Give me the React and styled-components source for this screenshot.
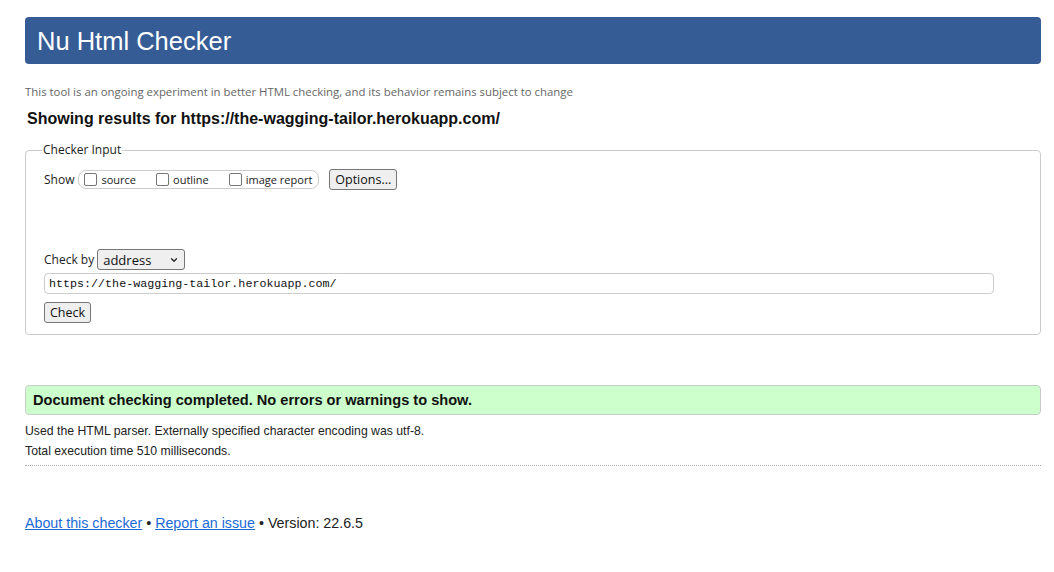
import styled, { createGlobalStyle } from 'styled-components';
import { ChevronDown } from 'lucide-react';

const GlobalStyle = createGlobalStyle`
	html, body {
		margin: 0;
		padding: 0;
		background: #ffffff;
	}
	body {
		font-family: Arial, 'Liberation Sans', sans-serif;
		color: #222222;
	}
`;

const Page = styled.div`
	padding: 17px 13px 40px 25px;
`;

const Banner = styled.h1`
	margin: 0;
	height: 47px;
	line-height: 48px;
	padding-left: 12px;
	background: #365c96;
	border-radius: 4px;
	color: #ffffff;
	font-family: 'Liberation Sans', Arial, sans-serif;
	font-weight: normal;
	font-size: 25.5px;
`;

const Tagline = styled.p`
	margin: 20px 0 0;
	font-family: 'Open Sans', 'Noto Sans', sans-serif;
	font-size: 11.4px;
	line-height: 16px;
	color: #666666;
`;

const ResultsFor = styled.h2`
	margin: 10px 0 0 2px;
	font-family: 'Liberation Sans', Arial, sans-serif;
	font-size: 16px;
	line-height: 18px;
	color: #111111;
`;

const Fieldset = styled.fieldset`
	margin: 14px 0 0;
	padding: 2px 18px 11px 18px;
	border: 1px solid #cccccc;
	border-radius: 4px;
	font-family: 'Open Sans', 'Noto Sans', sans-serif;
	font-size: 12px;
	color: #222222;
	legend {
		padding: 0 1px;
		margin-left: -2px;
		line-height: 16px;
	}
`;

const Row = styled.div`
	display: flex;
	align-items: center;
	margin-top: ${(p) => p.$top || 0}px;
	height: 21px;
`;

const Label = styled.span`
	font-size: 12px;
	margin-right: ${(p) => p.$right || 0}px;
`;

const Group = styled.div`
	display: flex;
	align-items: center;
	height: 17px;
	padding: 0 6px 0 5px;
	border: 1px solid #cccccc;
	border-radius: 8px;
	gap: 20px;
	margin-right: 10px;
`;

const CheckItem = styled.label`
	display: flex;
	align-items: center;
	gap: 4px;
	font-size: 11px;
	input {
		appearance: none;
		margin: 0;
		width: 13px;
		height: 13px;
		border: 1px solid #767676;
		border-radius: 2px;
		background: #ffffff;
	}
`;

const Button = styled.button`
	height: 21px;
	padding: 0 5px;
	background: #efefef;
	border: 1px solid #767676;
	border-radius: 3px;
	font-family: 'Open Sans', 'Noto Sans', sans-serif;
	font-size: 12.5px;
	color: #111111;
	line-height: 19px;
`;

const SelectWrap = styled.div`
	position: relative;
	width: 88px;
	height: 21px;
	select {
		appearance: none;
		width: 100%;
		height: 100%;
		padding: 0 0 0 5px;
		background: #efefef;
		border: 1px solid #767676;
		border-radius: 3px;
		font-family: 'Open Sans', 'Noto Sans', sans-serif;
		font-size: 13px;
		color: #111111;
	}
	svg {
		position: absolute;
		right: 6px;
		top: 6px;
		pointer-events: none;
	}
`;

const UrlInput = styled.input`
	display: block;
	box-sizing: border-box;
	width: 950px;
	height: 21px;
	margin-top: 3px;
	padding: 0 4px;
	border: 1px solid #cccccc;
	border-radius: 4px;
	font-family: 'Liberation Mono', 'DejaVu Sans Mono', monospace;
	font-size: 11.7px;
	color: #111111;
`;

const Success = styled.div`
	margin-top: 50px;
	height: 28px;
	line-height: 28px;
	padding-left: 7px;
	background: #ccffcc;
	border: 1px solid #cccccc;
	border-radius: 4px;
	font-family: 'Liberation Sans', Arial, sans-serif;
	font-weight: bold;
	font-size: 14.6px;
	color: #111111;
`;

const Note = styled.p`
	margin: ${(p) => p.$top || 0}px 0 0;
	font-family: 'Liberation Sans', Arial, sans-serif;
	font-size: 12.25px;
	line-height: 16px;
	color: #222222;
`;

const Rule = styled.hr`
	margin: 6px 0 0;
	border: 0;
	border-top: 1px dotted #aaaaaa;
`;

const Footer = styled.p`
	margin: 48px 0 0;
	font-family: 'Liberation Sans', Arial, sans-serif;
	font-size: 14.25px;
	line-height: 18px;
	color: #222222;
	a {
		color: #1a6ad6;
	}
`;

const App = () => {
	return (
		<Page>
			<GlobalStyle />
			<Banner>Nu Html Checker</Banner>
			<Tagline>
				This tool is an ongoing experiment in better HTML checking, and its behavior remains subject to change
			</Tagline>
			<ResultsFor>Showing results for https://the-wagging-tailor.herokuapp.com/</ResultsFor>
			<Fieldset>
				<legend>Checker Input</legend>
				<Row $top={9}>
					<Label $right={4}>Show</Label>
					<Group>
						<CheckItem>
							<input type="checkbox" />
							source
						</CheckItem>
						<CheckItem>
							<input type="checkbox" />
							outline
						</CheckItem>
						<CheckItem>
							<input type="checkbox" />
							image report
						</CheckItem>
					</Group>
					<Button>Options...</Button>
				</Row>
				<Row $top={59}>
					<Label $right={3}>Check by</Label>
					<SelectWrap>
						<select defaultValue="address">
							<option value="address">address</option>
							<option value="file">file upload</option>
							<option value="text">text input</option>
						</select>
						<ChevronDown size={10} strokeWidth={3} color="#222" />
					</SelectWrap>
				</Row>
				<UrlInput defaultValue="https://the-wagging-tailor.herokuapp.com/" />
				<Row $top={8}>
					<Button>Check</Button>
				</Row>
			</Fieldset>
			<Success>Document checking completed. No errors or warnings to show.</Success>
			<Note $top={8}>Used the HTML parser. Externally specified character encoding was utf-8.</Note>
			<Note $top={4}>Total execution time 510 milliseconds.</Note>
			<Rule />
			<Footer>
				<a href="#about">About this checker</a> • <a href="#issue">Report an issue</a> • Version: 22.6.5
			</Footer>
		</Page>
	);
};

export default App;
